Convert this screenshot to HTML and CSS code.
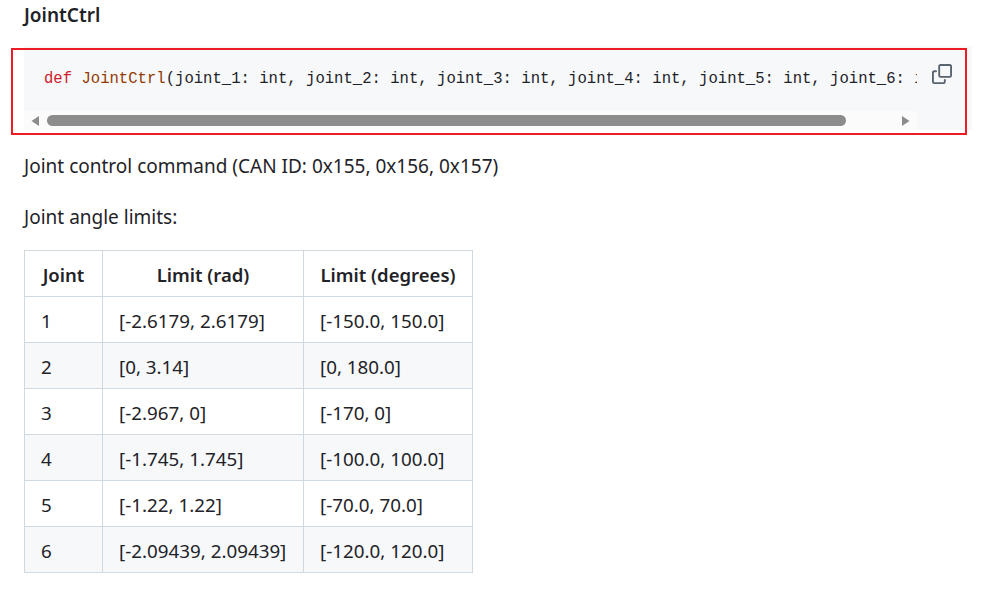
FILE: index.html
```html
<!DOCTYPE html>
<html lang="en">
<head>
<meta charset="utf-8">
<title>JointCtrl</title>
<link rel="stylesheet" href="styles.css">
</head>
<body>
<main class="doc">
  <h4 class="title">JointCtrl</h4>
  <div class="snippet">
    <div class="scroller">
      <pre class="code"><span class="kw">def</span> <span class="fn">JointCtrl</span>(joint_1: int, joint_2: int, joint_3: int, joint_4: int, joint_5: int, joint_6: int, gripper: int)</pre>
      <div class="scrollbar">
        <svg class="arrow" width="8" height="10" viewBox="0 0 8 10"><path d="M8 0v10L0.5 5z" fill="#8c8c8c"/></svg>
        <div class="track"><div class="thumb"></div></div>
        <svg class="arrow" width="8" height="10" viewBox="0 0 8 10"><path d="M0 0v10l7.5-5z" fill="#8c8c8c"/></svg>
      </div>
    </div>
    <svg class="copy" width="20" height="20" viewBox="0 0 16 16"><path fill="#59636e" d="M0 6.75C0 5.784.784 5 1.75 5h1.5a.75.75 0 0 1 0 1.5h-1.5a.25.25 0 0 0-.25.25v7.5c0 .138.112.25.25.25h7.5a.25.25 0 0 0 .25-.25v-1.5a.75.75 0 0 1 1.5 0v1.5A1.75 1.75 0 0 1 9.25 16h-7.5A1.75 1.75 0 0 1 0 14.25Z"/><path fill="#59636e" d="M5 1.75C5 .784 5.784 0 6.75 0h7.5C15.216 0 16 .784 16 1.75v7.5A1.75 1.75 0 0 1 14.25 11h-7.5A1.75 1.75 0 0 1 5 9.25Zm1.75-.25a.25.25 0 0 0-.25.25v7.5c0 .138.112.25.25.25h7.5a.25.25 0 0 0 .25-.25v-7.5a.25.25 0 0 0-.25-.25Z"/></svg>
    <div class="highlight"></div>
  </div>
  <p class="para">Joint control command (CAN ID: 0x155, 0x156, 0x157)</p>
  <p class="para">Joint angle limits:</p>
  <table class="limits">
    <colgroup><col class="col-joint"><col class="col-rad"><col class="col-deg"></colgroup>
    <thead>
      <tr><th>Joint</th><th>Limit (rad)</th><th>Limit (degrees)</th></tr>
    </thead>
    <tbody>
      <tr><td>1</td><td>[-2.6179, 2.6179]</td><td>[-150.0, 150.0]</td></tr>
      <tr><td>2</td><td>[0, 3.14]</td><td>[0, 180.0]</td></tr>
      <tr><td>3</td><td>[-2.967, 0]</td><td>[-170, 0]</td></tr>
      <tr><td>4</td><td>[-1.745, 1.745]</td><td>[-100.0, 100.0]</td></tr>
      <tr><td>5</td><td>[-1.22, 1.22]</td><td>[-70.0, 70.0]</td></tr>
      <tr><td>6</td><td>[-2.09439, 2.09439]</td><td>[-120.0, 120.0]</td></tr>
    </tbody>
  </table>
</main>
</body>
</html>
```
FILE: styles.css
```css
* { box-sizing: border-box; }
html, body { margin: 0; background: #fff; overflow: hidden; }
body { font-family: "Noto Sans", "Open Sans", sans-serif; font-size: 19px; color: #1f2328; }
.doc { width: 948px; margin-left: 24px; }
.title { margin: 0; padding-top: 4px; height: 46px; font-size: 19px; line-height: 22px; font-weight: 600; }
.snippet { position: relative; height: 84px; background: #f6f8fa; }
.scroller { width: 893px; height: 84px; display: flex; flex-direction: column; }
.code { margin: 0; height: 65px; padding: 21px 0 0 20px; overflow: hidden; font-family: "Liberation Mono", monospace; font-size: 15.6px; line-height: 24px; color: #1f2328; white-space: pre; }
.kw { color: #cf222e; }
.fn { color: #953800; }
.scrollbar { height: 19px; background: #fbfbfb; display: flex; align-items: center; padding: 0 7px 0 7px; gap: 8px; }
.track { flex: 1; height: 11px; }
.thumb { width: 799px; height: 11px; border-radius: 6px; background: #8c8c8c; }
.arrow { flex: none; }
.copy { position: absolute; left: 908px; top: 18px; }
.highlight { position: absolute; left: -13px; top: 2px; width: 956px; height: 87px; border: 2px solid #ed1c24; pointer-events: none; }
.para { margin: 0; line-height: 24px; }
.snippet + .para { margin-top: 24px; }
.para + .para { margin-top: 27px; }
.limits { margin-top: 21px; border-collapse: collapse; table-layout: fixed; width: 448px; font-size: 18.8px; }
.col-joint { width: 78px; }
.col-rad { width: 201px; }
.col-deg { width: 169px; }
.limits th, .limits td { border: 1px solid #d1d9e0; height: 46px; padding: 2px 16px 0; line-height: 24px; text-align: left; white-space: nowrap; font-weight: 400; }
.limits th { font-size: 18.5px; font-weight: 600; text-align: center; }
.limits tbody tr:nth-child(even) { background: #f6f8fa; }
```
